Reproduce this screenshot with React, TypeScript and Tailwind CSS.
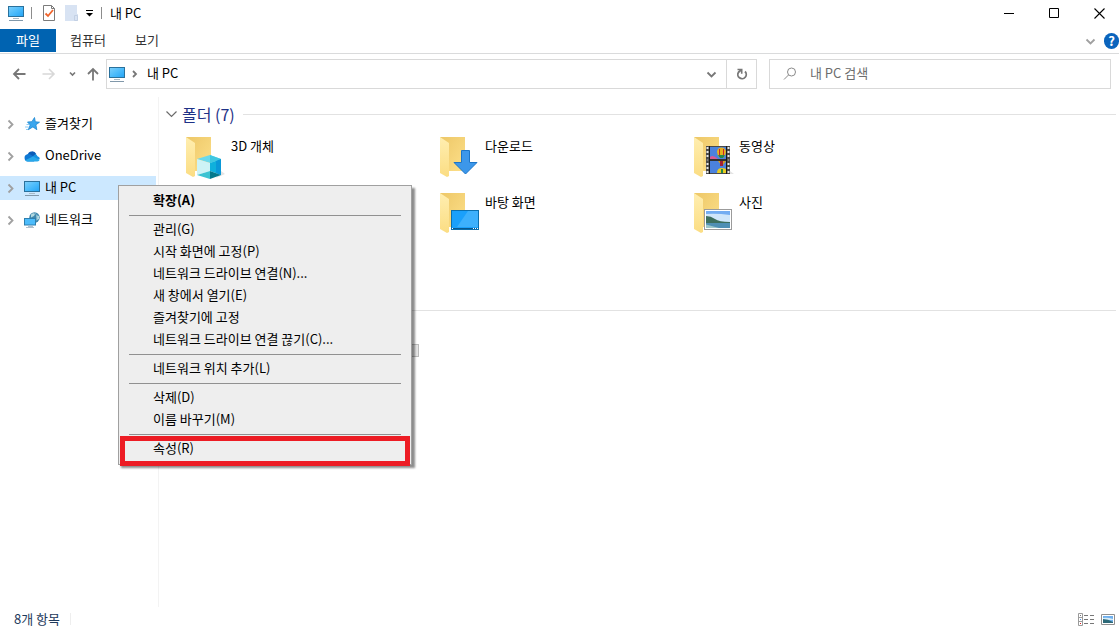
import { useState } from 'react';

const sideItems = [
  { id: 'fav', label: '즐겨찾기', Icon: StarIcon },
  { id: 'onedrive', label: 'OneDrive', Icon: CloudIcon },
  { id: 'pc', label: '내 PC', Icon: PcIcon },
  { id: 'network', label: '네트워크', Icon: NetworkIcon },
];

const folders = [
  { label: '3D 개체', Overlay: CubeOverlay, cell: 'col-start-1 row-start-1' },
  { label: '다운로드', Overlay: DownloadOverlay, cell: 'col-start-2 row-start-1' },
  { label: '동영상', Overlay: VideoOverlay, cell: 'col-start-3 row-start-1' },
  { label: '바탕 화면', Overlay: DesktopOverlay, cell: 'col-start-2 row-start-2' },
  { label: '사진', Overlay: PictureOverlay, cell: 'col-start-3 row-start-2' },
];

const menuGroups = [
  ['확장(A)'],
  [
    '관리(G)',
    '시작 화면에 고정(P)',
    '네트워크 드라이브 연결(N)...',
    '새 창에서 열기(E)',
    '즐겨찾기에 고정',
    '네트워크 드라이브 연결 끊기(C)...',
  ],
  ['네트워크 위치 추가(L)'],
  ['삭제(D)', '이름 바꾸기(M)'],
  ['속성(R)'],
];

function PcIcon() {
  return (
    <svg width="16" height="16" viewBox="0 0 16 16" className="shrink-0">
      <defs>
        <linearGradient id="screen" x1="0" y1="0" x2="1" y2="1">
          <stop offset="0" stopColor="#7fd0fb" />
          <stop offset="0.5" stopColor="#4dbcfb" />
          <stop offset="1" stopColor="#23a3f5" />
        </linearGradient>
      </defs>
      <rect x="0.5" y="1.5" width="15" height="10" fill="url(#screen)" stroke="#2a719c" />
      <path d="M5 13.500h6" stroke="#a9bac6" />
      <path d="M1 15.500h14" stroke="#8198aa" />
    </svg>
  );
}

function StarIcon() {
  return (
    <svg width="16" height="16" viewBox="0 0 16 16" className="shrink-0">
      <path
        d="M10.500 1.500l.8 4.300 4.200.4-3.600 2.600.9 4.900-3.900-2.800-4.600 2.800 1.900-4.700L3.500 6l4.400-.3z"
        fill="#3aa6ee"
        stroke="#1c86d0"
        strokeWidth="0.8"
      />
      <path d="M2.500 8.500h3M1 11h3.500M2 13.500h2" stroke="#6fbdf0" strokeWidth="0.8" />
    </svg>
  );
}

function CloudIcon() {
  return (
    <svg width="16" height="16" viewBox="0 0 16 16" className="shrink-0">
      <path d="M3.500 7A4.700 4.700 0 0 1 12.300 6L9 10 3 9z" fill="#0a5cb8" />
      <path d="M3.800 13.500A3.700 3.700 0 0 1 3.500 6.200c1.500-.3 2.800.1 4 1l4.500 3.300-2 3z" fill="#0f78d4" />
      <path d="M8 9l3.500-3a4 4 0 0 1 2 2.200A2.800 2.800 0 0 1 15.800 11L12 12z" fill="#1490df" />
      <path d="M1.200 12.200L9 8.500l6.700 3.300a2.600 2.600 0 0 1-2.300 1.700H3.800a3.700 3.700 0 0 1-2.600-1.300z" fill="#28a8ea" />
    </svg>
  );
}

function NetworkIcon() {
  return (
    <svg width="16" height="16" viewBox="0 0 16 16" className="shrink-0">
      <circle cx="10.500" cy="5.500" r="5.200" fill="#3f87ad" />
      <path d="M7 2.500q3-2.200 4-.5l-1 2-3 1.500zM12 3l3 1v3l-2 1z" fill="#b3d9e0" />
      <path d="M10.500.3q5 5 0 10.400" fill="none" stroke="#82b7ce" strokeWidth="0.8" />
      <rect x="0.500" y="6.500" width="11" height="6.500" fill="#4dbcfb" stroke="#2f7fae" />
      <path d="M4 14.500h5M2 15.500h8" stroke="#9db1c1" strokeWidth="0.8" />
    </svg>
  );
}

function Chevron({ dir, className }: { dir: 'right' | 'down'; className?: string }) {
  return (
    <svg width="11" height="11" viewBox="0 0 11 11" className={className}>
      <path
        d={dir === 'right' ? 'M3.500 1.500l4 4-4 4' : 'M1.500 3.500l4 4 4-4'}
        fill="none"
        stroke="currentColor"
        strokeWidth="1.800"
      />
    </svg>
  );
}

function CubeOverlay() {
  return (
    <g>
      <path d="M30 41l9-4-4-3z" fill="#e4e4e4" />
      <path d="M24 18l11 4-11 4-13-4z" fill="#6ad9ec" />
      <path d="M24 18l11 4-11 4z" fill="#3fc7e0" />
      <path d="M11 22l13 4v8l-13 4z" fill="#cdf3f6" />
      <path d="M24 26l11-4v16l-11-4z" fill="#0fb0dc" />
      <path d="M30 24l5-2v16l-5-2z" fill="#0a98d8" />
      <path d="M11 38l13-4v8z" fill="#3cc3d2" />
      <path d="M24 34l11 4-11 4z" fill="#04788c" />
    </g>
  );
}

function DownloadOverlay() {
  return (
    <path d="M21.500 13.500h8v12h7.500l-11.500 11.500-11.500-11.500h7.500z" fill="#3c97ea" stroke="#1c75c8" />
  );
}

function VideoOverlay() {
  return (
    <g>
      <path d="M36 37h4l-4-3z" fill="#e4e4e4" />
      <rect x="12" y="9" width="24" height="28" fill="#4a4a4a" />
      <path d="M13.500 10v27M34.500 10v27" stroke="#e8e8e8" strokeWidth="2" strokeDasharray="2 2" />
      <rect x="16" y="10" width="16" height="12" fill="#4b82dd" />
      <rect x="16" y="24" width="16" height="12" fill="#4b82dd" />
      <path d="M16 20q3-3 8 2h-8z" fill="#d75a92" />
      <path d="M23 15a4 4 0 0 1 9 0q0 3-3 6h-3q-3-3-3-6z" fill="#e8b21c" />
      <path d="M25 12h1v8h-1zM29 12h1v8h-1z" fill="#c5262c" />
      <path d="M24 18h7l-2 3h-3z" fill="#238a4b" />
      <path d="M24 24h8l-3 4h-2z" fill="#d99a1c" />
      <path d="M26 24h3v5h-3z" fill="#a32035" />
      <path d="M23 36q0-5 5-5t4 3v2z" fill="#e9cc22" />
      <path d="M27 32h2v4h-2z" fill="#238a4b" />
      <path d="M15.500 9v28M32.500 9v28M12 23h24" stroke="#181818" />
    </g>
  );
}

function DesktopOverlay() {
  return (
    <g>
      <rect x="11.500" y="17.500" width="27" height="19" fill="#1aa0fb" stroke="#0b6fae" />
      <path d="M28 18h10v16H17z" fill="#3db0fc" />
      <path d="M12 35.500h26" stroke="#08588f" />
      <path d="M12 35.500h1M33 35.500h1M35 35.500h1M37 35.500h1" stroke="#fff" />
    </g>
  );
}

function PictureOverlay() {
  return (
    <g>
      <rect x="10.500" y="16.500" width="27" height="20" fill="#fff" stroke="#9b9b9b" />
      <rect x="12" y="18" width="24" height="17" fill="#73adf2" />
      <path d="M12 21q10-1 24 1v7H12z" fill="#cfe6fa" />
      <path d="M12 23q5 0 9 3t15 3v1H12z" fill="#3c6e5e" />
      <path d="M12 30h24v5H12z" fill="#4f8fb4" />
      <path d="M12 31.500l13 3.500H12z" fill="#9bc6cb" />
    </g>
  );
}

function FolderIcon({ Overlay }: { Overlay: () => React.JSX.Element }) {
  return (
    <svg width="40" height="44" viewBox="0 0 40 44" className="shrink-0">
      <defs>
        <linearGradient id="back" x1="0" y1="0" x2="1" y2="1">
          <stop offset="0" stopColor="#edc767" />
          <stop offset="1" stopColor="#fde08a" />
        </linearGradient>
        <linearGradient id="flap" x1="0" y1="0" x2="0" y2="1">
          <stop offset="0" stopColor="#ffeeb0" />
          <stop offset="1" stopColor="#fbdd83" />
        </linearGradient>
      </defs>
      <path d="M0 0h25v34H9z" fill="url(#back)" />
      <path d="M0 0l9 6v33l-2 1-7-4z" fill="url(#flap)" />
      <Overlay />
    </svg>
  );
}

function TitleBar() {
  return (
    <header className="flex h-[29px] items-center pb-[3px] pl-2">
      <PcIcon />
      <div className="ml-[7px] h-3 w-px bg-[#8c8c8c]" />
      <button type="button" aria-label="속성" className="ml-2.5">
        <svg width="14" height="16" viewBox="0 0 14 16">
          <path d="M1.500.5h8l3 3v12h-11z" fill="#fff" stroke="#7b7b7b" />
          <path d="M9.500.5v3h3" fill="none" stroke="#7b7b7b" />
          <path d="M3.500 8.500l2.500 2.500 5-6" fill="none" stroke="#f0642c" strokeWidth="1.800" />
        </svg>
      </button>
      <button type="button" aria-label="새 폴더" className="ml-[9px]">
        <svg width="13" height="16" viewBox="0 0 13 16">
          <path d="M0 0h12v9h1v7H0z" fill="#d8e3f3" />
          <path d="M9.500 15.500v-5h3v5z" fill="none" stroke="#c3d0e4" />
        </svg>
      </button>
      <button type="button" aria-label="빠른 실행 도구 모음" className="ml-2">
        <svg width="8" height="8" viewBox="0 0 8 8">
          <path d="M0 1.500h7" stroke="#000" />
          <path d="M0 4h7L3.500 7.500z" fill="#000" />
        </svg>
      </button>
      <div className="ml-[7px] h-3 w-px bg-[#8c8c8c]" />
      <h1 className="ml-2 grow">내 PC</h1>
      <div className="flex gap-[9px] pr-0.5">
        <button type="button" aria-label="최소화" className="flex w-9 justify-center">
          <svg width="11" height="11" viewBox="0 0 11 11">
            <path d="M0 5.500h10" stroke="#000" />
          </svg>
        </button>
        <button type="button" aria-label="최대화" className="flex w-9 justify-center">
          <svg width="11" height="11" viewBox="0 0 11 11">
            <path d="M.5.5h9v9h-9z" fill="none" stroke="#000" />
          </svg>
        </button>
        <button type="button" aria-label="닫기" className="flex w-9 justify-center">
          <svg width="11" height="11" viewBox="0 0 11 11">
            <path d="M.5.500l10 10M10.500.500l-10 10" stroke="#000" strokeWidth="1.100" />
          </svg>
        </button>
      </div>
    </header>
  );
}

function Ribbon() {
  return (
    <nav className="flex h-[25px] items-start border-b border-[#dadbdc]">
      <button type="button" className="h-[23px] w-14 bg-[#0063b1] pb-0.5 text-white">
        파일
      </button>
      <button type="button" className="h-[23px] w-16 pb-0.5 text-[#333]">
        컴퓨터
      </button>
      <button type="button" className="h-[23px] w-[54px] pb-0.5 text-[#333]">
        보기
      </button>
      <div className="ml-auto flex h-6 items-center gap-2">
        <button type="button" aria-label="리본 확장" className="text-[#a0a0a0]">
          <Chevron dir="down" />
        </button>
        <button
          type="button"
          aria-label="도움말"
          className="h-4 w-[15px] rounded-full bg-[#0a64bd] text-center leading-4 font-bold text-white"
        >
          ?
        </button>
      </div>
    </nav>
  );
}

function AddressRow() {
  return (
    <div className="flex h-[43px] items-start pt-[5px] pr-2 pl-3">
      <div className="flex h-[30px] w-[94px] shrink-0 items-center text-[#777]">
        <button type="button" aria-label="뒤로">
          <svg width="14" height="14" viewBox="0 0 14 14" fill="none" stroke="currentColor" strokeWidth="1.800">
            <path d="M13.500 7H2M7 2L2 7l5 5" />
          </svg>
        </button>
        <button type="button" aria-label="앞으로" className="ml-4 text-[#d8d8d8]" disabled>
          <svg width="14" height="14" viewBox="0 0 14 14" fill="none" stroke="currentColor" strokeWidth="1.600">
            <path d="M.5 7H12M7 2l5 5-5 5" />
          </svg>
        </button>
        <button type="button" aria-label="최근 위치" className="ml-3">
          <svg width="8" height="8" viewBox="0 0 8 8" fill="none" stroke="currentColor" strokeWidth="1.600">
            <path d="M2 2.500L4.500 5 7 2.500" />
          </svg>
        </button>
        <button type="button" aria-label="위로" className="ml-2.5">
          <svg width="14" height="14" viewBox="0 0 14 14" fill="none" stroke="currentColor" strokeWidth="1.800">
            <path d="M7 13.500V2M2 7l5-5 5 5" />
          </svg>
        </button>
      </div>
      <div className="flex h-[30px] grow items-center border border-[#d9d9d9]">
        <div className="flex grow items-center pl-0.5">
          <PcIcon />
          <svg width="8" height="8" viewBox="0 0 8 8" className="ml-1.5">
            <path d="M2 1l3 3-3 3" fill="none" stroke="#777" strokeWidth="1.800" />
          </svg>
          <button type="button" className="ml-2 pb-0.5">
            내 PC
          </button>
        </div>
        <button type="button" aria-label="이전 위치" className="mr-[9px] text-[#777]">
          <Chevron dir="down" />
        </button>
        <button
          type="button"
          aria-label="새로 고침"
          className="flex h-full w-[30px] items-center justify-center border-l border-[#d9d9d9]"
        >
          <svg width="12" height="12" viewBox="0 0 12 12" fill="none" stroke="#777" strokeWidth="1.800">
            <path d="M9 3.500A4.200 4.200 0 1 1 2.500 4.200L5 2" />
            <path d="M1.500 1.500h4.200v4.200" strokeWidth="1.600" />
          </svg>
        </button>
      </div>
      <label className="ml-3 flex h-[30px] w-[342px] items-center border border-[#d9d9d9] pl-[13px]">
        <svg width="14" height="14" viewBox="0 0 14 14" fill="none" stroke="#8a8a8a" className="shrink-0">
          <circle cx="8.500" cy="5" r="4" />
          <path d="M5.500 8L1 12.500" />
        </svg>
        <input
          type="text"
          aria-label="내 PC 검색"
          placeholder="내 PC 검색"
          className="ml-[13px] w-full pb-0.5 outline-none placeholder:text-[#6d6d6d]"
        />
      </label>
    </div>
  );
}

function ContextMenu() {
  return (
    <div
      role="menu"
      className="absolute top-[185px] left-[118px] w-[294px] border border-[#a0a0a0] bg-[#eee] px-2.5 pt-[3px] pb-[5px] shadow-[3px_3px_2px_rgba(0,0,0,0.45)]"
    >
      {menuGroups.map((group, i) => (
        <div key={group[0]}>
          {i > 0 && <div className="mt-1 mb-0.5 h-px bg-[#909090]" />}
          {group.map((label) => (
            <button
              key={label}
              type="button"
              role="menuitem"
              className={`block h-[22px] w-full pl-6 text-left ${i === 0 ? 'font-bold' : ''}`}
            >
              {label}
            </button>
          ))}
        </div>
      ))}
      <div className="pointer-events-none absolute right-px -bottom-0.5 left-px h-[30px] border-[5px] border-[#ed1c24]" />
    </div>
  );
}

export default function App() {
  const [selected, setSelected] = useState('pc');

  return (
    <div className="relative flex min-h-screen flex-col bg-white font-['Noto_Sans_CJK_KR',sans-serif] text-[13px] leading-5 text-black">
      <TitleBar />
      <Ribbon />
      <AddressRow />

      <div className="flex grow">
        <aside className="flex w-[159px] shrink-0 flex-col gap-2 border-r border-[#f3f3f3] pt-[15px] pr-0.5">
          {sideItems.map(({ id, label, Icon }) => (
            <button
              key={id}
              type="button"
              onClick={() => setSelected(id)}
              className={`flex h-6 items-center pl-[5px] ${selected === id ? 'bg-[#cce8ff]' : ''}`}
            >
              <Chevron dir="right" className="mr-2 text-[#a0a0a0]" />
              <Icon />
              <span className="ml-[5px] pb-0.5">{label}</span>
            </button>
          ))}
        </aside>

        <main className="grow pt-[7px] pr-[3px] pl-[7px]">
          <div className="flex items-center">
            <svg width="12" height="12" viewBox="0 0 12 12">
              <path d="M.5 3.500L5.500 8.500l5-5" fill="none" stroke="#6b6b6b" strokeWidth="1.200" />
            </svg>
            <h2 className="ml-1 text-base leading-5 text-[#1e3287]">폴더 (7)</h2>
            <div className="ml-2 h-px grow bg-[#e2e2e2]" />
          </div>
          <div className="mt-[13px] ml-5 grid auto-rows-[56px] grid-cols-[254px_254px_254px]">
            {folders.map(({ label, Overlay, cell }) => (
              <div key={label} className={`flex gap-[5px] ${cell}`}>
                <FolderIcon Overlay={Overlay} />
                <span className="leading-[18px]">{label}</span>
              </div>
            ))}
          </div>
          {/* drives */}
          <div className="mt-[61px] ml-60 h-px bg-[#e2e2e2]" />
          <div className="mt-[33px] ml-[66px] h-[13px] w-[187px] border border-[#bcbcbc] bg-[#e6e6e6]" />
        </main>
      </div>

      <footer className="flex h-6 items-center pr-1 pl-3.5 text-[#1e395b]">
        <span>8개 항목</span>
        <div className="ml-2.5 h-3 w-px bg-[#eee]" />
        <button type="button" aria-label="자세히" className="ml-auto">
          <svg width="17" height="13" viewBox="0 0 17 13">
            <path d="M.5.500h4v12h-4zM.5 4.500h4M.5 8.500h4" fill="none" stroke="#9b9b9b" />
            <path d="M2 2.500h1" stroke="#777" />
            <path d="M2 6.500h1" stroke="#4b8ee0" />
            <path d="M2 10.500h1" stroke="#d22" />
            <path d="M6 2.500h4M12 2.500h4M6 6.500h4M12 6.500h4M6 10.500h4M12 10.500h4" stroke="#777" />
          </svg>
        </button>
        <button type="button" aria-label="큰 아이콘" className="ml-1.5">
          <svg width="14" height="11" viewBox="0 0 14 11">
            <path d="M.5.500h13v10H.5z" fill="#fff" stroke="#8f8f8f" />
            <path d="M2 2h10v7H2z" fill="#6fb0ee" />
            <path d="M2 4q4-1 10 1v1H2z" fill="#d7ecf8" />
            <path d="M2 5q5 0 10 3v1H2z" fill="#2d6a78" />
          </svg>
        </button>
      </footer>

      <ContextMenu />
    </div>
  );
}
